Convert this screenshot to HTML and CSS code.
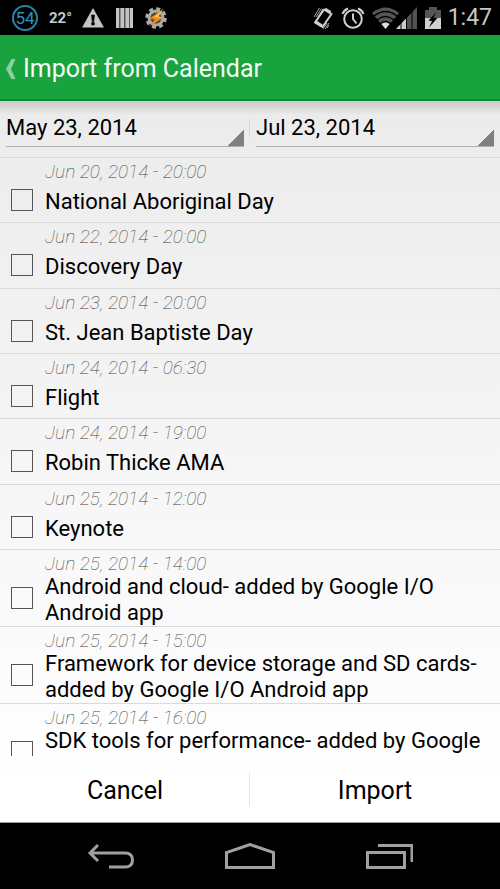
FILE: index.html
```html
<!DOCTYPE html>
<html lang="en">
<head>
<meta charset="utf-8">
<meta name="viewport" content="width=device-width, initial-scale=1">
<title>Import from Calendar</title>
<link rel="stylesheet" href="styles.css">
</head>
<body>
<div class="app">
  <div class="status">
    <div class="status-group status-left">
      <span class="badge">54</span>
      <span class="temp">22°</span>
      <svg width="24" height="22" viewBox="0 0 24 22"><path d="M12 1 23 20.500H1Z" fill="#c4c4c4"/><path d="M10.500 8h3l-.7 6.500h-1.600zM10.700 15.500h2.600V18h-2.600z" fill="#000" stroke="#000" stroke-width=".6"/></svg>
      <svg width="18" height="22" viewBox="0 0 18 22"><path d="M0 1h17v20H0z" fill="#555"/><path d="M0 1h3v20H0zM4.500 1h3.500v20H4.500zM9.500 1H13v20H9.500zM14 1h3v20h-3z" fill="#c4c4c4"/></svg>
      <svg width="22" height="22" viewBox="0 0 22 22"><circle cx="11" cy="11" r="7" fill="#444" stroke="#aaa" stroke-width="3"/><circle cx="11" cy="11" r="9.300" fill="none" stroke="#aaa" stroke-width="3" stroke-dasharray="4 3.300"/><path d="M18 2 4.500 11.500l5 1L4.500 19.500 18.500 10.500l-5-1Z" fill="#e88a1c"/><path d="M18 2 9 10l5 1 4.500-.5-5-1Z" fill="#f3bd55"/></svg>
    </div>
    <div class="status-group status-right">
      <svg width="22" height="24" viewBox="0 0 22 24" fill="none" stroke="#d0d0d0"><path d="M12 3.500 19.500 8 10.500 21 3 16.500Z" stroke-width="2" stroke-linejoin="round"/><path d="m13 3 5.500 3.500M4 16l6 4" stroke-width="3"/><path d="M4 11 9.500 2.500M2 11 7.500 2M6 11l5-8M11 23l4-6M13 23l4-6M15 22l2-3" stroke-width="1" opacity=".8"/></svg>
      <svg width="24" height="24" viewBox="0 0 24 24" fill="none" stroke="#d0d0d0" stroke-width="2"><circle cx="12" cy="13" r="8.800"/><path d="M12 7.500V13l3.500 4.500M1.500 8Q3 4 7 2.500M22.500 8Q21 4 17 2.500"/></svg>
      <svg width="46" height="24" viewBox="0 0 46 24"><path d="M0 7Q13.500-4 27 7L13.500 23Z" fill="#565656"/><path d="M2 10q11.500-9 23 0M5 14q8.500-7 17 0M8 18q5.500-5 11 0" fill="none" stroke="#000" stroke-width="1.300"/><path d="M9.500 18q4-3 8 0l-4 5Z" fill="#ddd"/><path d="M24 23 45 1v22Z" fill="#525252"/><path d="M24 23l10-10.500V23Z" fill="#ccc"/><path d="M29 10v13M34.500 6v17M40 4v19" stroke="#000" stroke-width="1"/></svg>
      <svg width="16" height="24" viewBox="0 0 16 24"><path d="M4 1h8v3h4v9H0V4h4Z" fill="#555"/><path d="M0 12h16v11H0Z" fill="#cfcfcf"/><path d="M11.500 6 3.500 14.500l3.500.5-3 6.500 8.500-9.500-4-.5Z" fill="#000"/></svg>
      <span class="clock">1:47</span>
    </div>
  </div>
  <header class="bar">
    <a class="up" href="#" aria-label="Back"><svg width="10" height="20" viewBox="0 0 10 20"><path d="M5.500 0h4L5 10l4.500 10h-4L0 10Z" fill="#8fd0a0"/></svg></a>
    <h1 class="title">Import from Calendar</h1>
  </header>
  <main class="content">
    <div class="range">
      <div class="range-cell"><select class="picker" aria-label="Start date"><option>May 23, 2014</option></select></div>
      <div class="range-cell"><select class="picker" aria-label="End date"><option>Jul 23, 2014</option></select></div>
    </div>
    <ul class="list">
      <li class="row"><label class="event"><span class="when">Jun 20, 2014 - 20:00</span><input class="check" type="checkbox"><span class="name">National Aboriginal Day</span></label></li>
      <li class="row"><label class="event"><span class="when">Jun 22, 2014 - 20:00</span><input class="check" type="checkbox"><span class="name">Discovery Day</span></label></li>
      <li class="row"><label class="event"><span class="when">Jun 23, 2014 - 20:00</span><input class="check" type="checkbox"><span class="name">St. Jean Baptiste Day</span></label></li>
      <li class="row"><label class="event"><span class="when">Jun 24, 2014 - 06:30</span><input class="check" type="checkbox"><span class="name">Flight</span></label></li>
      <li class="row"><label class="event"><span class="when">Jun 24, 2014 - 19:00</span><input class="check" type="checkbox"><span class="name">Robin Thicke AMA</span></label></li>
      <li class="row"><label class="event"><span class="when">Jun 25, 2014 - 12:00</span><input class="check" type="checkbox"><span class="name">Keynote</span></label></li>
      <li class="row"><label class="event"><span class="when">Jun 25, 2014 - 14:00</span><input class="check" type="checkbox"><span class="name">Android and cloud- added by Google I/O Android app</span></label></li>
      <li class="row"><label class="event"><span class="when">Jun 25, 2014 - 15:00</span><input class="check" type="checkbox"><span class="name">Framework for device storage and SD cards- added by Google I/O Android app</span></label></li>
      <li class="row"><label class="event"><span class="when">Jun 25, 2014 - 16:00</span><input class="check" type="checkbox"><span class="name">SDK tools for performance- added by Google I/O Android app</span></label></li>
    </ul>
    <div class="actions">
      <button class="action" type="button">Cancel</button>
      <button class="action" type="button">Import</button>
    </div>
  </main>
  <nav class="nav">
    <button class="key" type="button" aria-label="Back"><svg width="48" height="28" viewBox="0 0 48 28" fill="none" stroke="#a0a0a0" stroke-width="3"><path d="M11 2 3 10l8 8M3 10h35q7.500 0 7.500 7t-7.500 7H22"/></svg></button>
    <button class="key" type="button" aria-label="Home"><svg width="52" height="28" viewBox="0 0 52 28" fill="none" stroke="#a0a0a0" stroke-width="3"><path d="M2.500 24.500v-15L26 1.500l23.500 8v15Z"/></svg></button>
    <button class="key" type="button" aria-label="Recent apps"><svg width="48" height="28" viewBox="0 0 48 28" fill="none" stroke="#a0a0a0" stroke-width="3"><path d="M2.500 9.500h37v15h-37ZM13 2.500h34V19"/></svg></button>
  </nav>
</div>
</body>
</html>
```
FILE: styles.css
```css
* { box-sizing: border-box; }

body {
  margin: 0;
  background: #000;
  color: #000;
  font-family: Roboto, "Noto Sans", sans-serif;
}

svg { display: block; flex: none; }

button, select {
  border: 0;
  border-radius: 0;
  background: none;
  color: inherit;
  font: inherit;
}

.app {
  display: flex;
  flex-direction: column;
  height: 100vh;
}

.status {
  display: flex;
  justify-content: space-between;
  align-items: center;
  flex: none;
  height: 35px;
  padding: 0 8px 0 12px;
  background: #000;
}

.status-group { display: flex; align-items: center; }
.status-left { gap: 11px; }
.status-right { gap: 7px; }

.badge {
  width: 26px;
  height: 26px;
  border: 2px solid #2585ab;
  border-radius: 50%;
  color: #2f93ba;
  font-size: 17px;
  line-height: 22px;
  text-align: center;
}

.temp {
  width: 21px;
  color: #c8c8c8;
  font-size: 15px;
  font-weight: 700;
  white-space: nowrap;
}

.clock { color: #c8c8c8; font-size: 23px; line-height: 28px; }

.bar {
  display: flex;
  align-items: center;
  flex: none;
  gap: 7px;
  height: 66px;
  padding: 4px 6px 0;
  border-bottom: 2px solid #0b8a2a;
  background: #18a33f;
}

.title {
  margin: 0;
  color: #f2fbf4;
  font-size: 25px;
  font-weight: 400;
  line-height: 32px;
}

.content {
  display: flex;
  flex-direction: column;
  flex: 1;
  min-height: 0;
  border-bottom: 1px solid #999;
  background:
    linear-gradient(rgba(0, 0, 0, 0.14), rgba(0, 0, 0, 0)) top / 100% 14px no-repeat,
    linear-gradient(#ebebeb, #fff 96%);
}

.range {
  display: grid;
  grid-template-columns: 1fr 1fr;
  flex: none;
  height: 56px;
  padding: 8px 0 10px;
}

.range-cell { position: relative; padding: 0 6px; }

.range-cell + .range-cell::before,
.action + .action::before {
  content: "";
  position: absolute;
  left: -1px;
  top: 10px;
  width: 1px;
  height: 18px;
  background: #d8d8d8;
}

.picker {
  display: block;
  width: 100%;
  height: 38px;
  padding: 0 20px 0 0;
  appearance: none;
  border-bottom: 1px solid #b0b0b0;
  background: linear-gradient(135deg, transparent 50%, #808080 50%) right bottom / 17px 17px no-repeat;
  font-size: 22px;
}

.list {
  flex: 1;
  min-height: 0;
  margin: 0;
  padding: 0;
  overflow: hidden;
  list-style: none;
}

.row { border-top: 1px solid #dadada; }

.event {
  display: grid;
  grid-template-columns: 22px 1fr;
  grid-template-rows: 20px minmax(40px, auto);
  column-gap: 12px;
  align-items: center;
  padding: 4px 8px 0 11px;
}

.row:nth-child(3n + 2) .event { padding-bottom: 1px; }
.row:nth-child(8) .event { padding-bottom: 0; }

.when {
  grid-column: 2;
  color: #444;
  font-size: 19px;
  font-style: italic;
  font-weight: 100;
  line-height: 20px;
}

.check {
  appearance: none;
  width: 22px;
  height: 22px;
  margin: 0 0 4px;
  border: 1px solid #555;
}

.check:checked { background: #18a33f; }

.name { font-size: 22px; line-height: 26px; }

.actions {
  display: grid;
  grid-template-columns: 1fr 1fr;
  flex: none;
  height: 66px;
}

.action {
  position: relative;
  padding: 2px 0 0;
  font-size: 25px;
}

.action + .action::before {
  top: 16px;
  height: 34px;
  background: #e6e6e6;
}

.nav {
  display: flex;
  justify-content: center;
  align-items: center;
  flex: none;
  height: 66px;
  padding-top: 2px;
  background: #000;
}

.key { display: grid; place-items: center; width: 139px; height: 100%; padding: 0; }
```
